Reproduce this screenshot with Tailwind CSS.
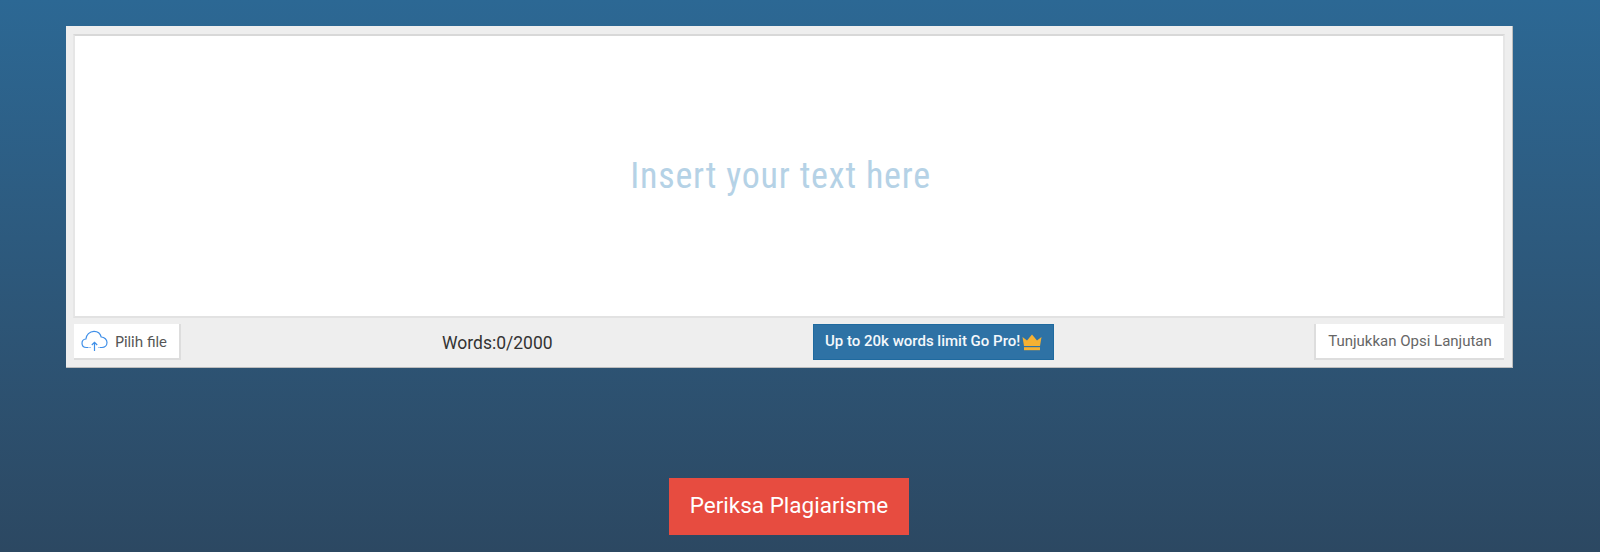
<!DOCTYPE html>
<html><head><meta charset="utf-8"><script src="https://cdn.jsdelivr.net/npm/@tailwindcss/browser@4"></script></head>
<body class="m-0 overflow-hidden">
<div class="h-[552px] w-[1600px] bg-linear-to-b from-[#2c6894] to-[#2c4862] pt-[26px] pl-[66px] font-['Roboto',sans-serif]">
  <div class="w-[1447px] h-[342px] bg-[#eeeeee] border-b border-r border-[#bdbdbd] pt-[8px] pl-[7px] pr-[7px] flex flex-col">
    <div class="h-[284px] bg-white border-2 border-t-[#d8d8d8] border-x-[#e6e6e6] border-b-[#e2e2e2] flex items-center justify-center pr-[17px]">
      <span class="text-[#b5d2e6] text-[36px] tracking-[0.8px] [font-stretch:75%]">Insert your text here</span>
    </div>
    <div class="flex items-start justify-between pt-[6px] relative">
      <div class="ml-[1px] w-[107px] h-[36px] bg-white border-r-2 border-b-2 border-[#dddddd] flex items-center pl-[7px] gap-[7px] text-[15px] text-[#555555] font-['Lato',sans-serif]">
        <svg width="27" height="22" viewBox="0 0 27 22" fill="none" stroke="#3f8fe8" stroke-width="1.2"><path d="M7 17.5H5.5C2.8 17.5 1 15.6 1 13.2 1 11 2.6 9.2 4.9 9 5.2 5 8.6 1.3 13 1.3c3.7 0 6.4 2.4 7.2 5.7 3.3.1 5.8 2.8 5.8 5.6 0 2.8-2.2 4.9-5 4.9h-2"/><path d="M13.5 21V12.5M10.8 15l2.7-2.7 2.7 2.7"/><path d="M7 17.5h3M17 17.5h2" stroke-opacity=".5"/></svg>
        <span>Pilih file</span>
      </div>
      <div class="absolute left-[369px] top-[15px] text-[17.5px] leading-[20px] text-[#333333]">Words:0/2000</div>
      <div class="absolute left-[740px] top-[6px] w-[241px] h-[36px] bg-[#2e72a5] border border-[#1f6a9f] flex items-center pl-[11px] gap-[2px] text-[15px] font-medium text-[#f4f8fb]">
        <span class="whitespace-nowrap -mt-[2px]">Up to 20k words limit Go Pro!</span>
        <svg width="20" height="17" viewBox="0 0 20 17" fill="#f5b133"><path d="M0.5 3l4.5 3.5L10 0.5l5 6L19.5 3 18 12H2z"/><rect x="2" y="13.2" width="16" height="3"/></svg>
      </div>
      <div class="mr-[1px] w-[190px] h-[36px] bg-white border-l-2 border-b-2 border-[#dddddd] flex items-center justify-center text-[15px] text-[#666666]">Tunjukkan Opsi Lanjutan</div>
    </div>
  </div>
  <button class="block ml-[603px] mt-[110px] w-[240px] h-[57px] pb-[2px] bg-[#e74c40] text-white text-[22.5px] border-0">Periksa Plagiarisme</button>
</div>
</body></html>
